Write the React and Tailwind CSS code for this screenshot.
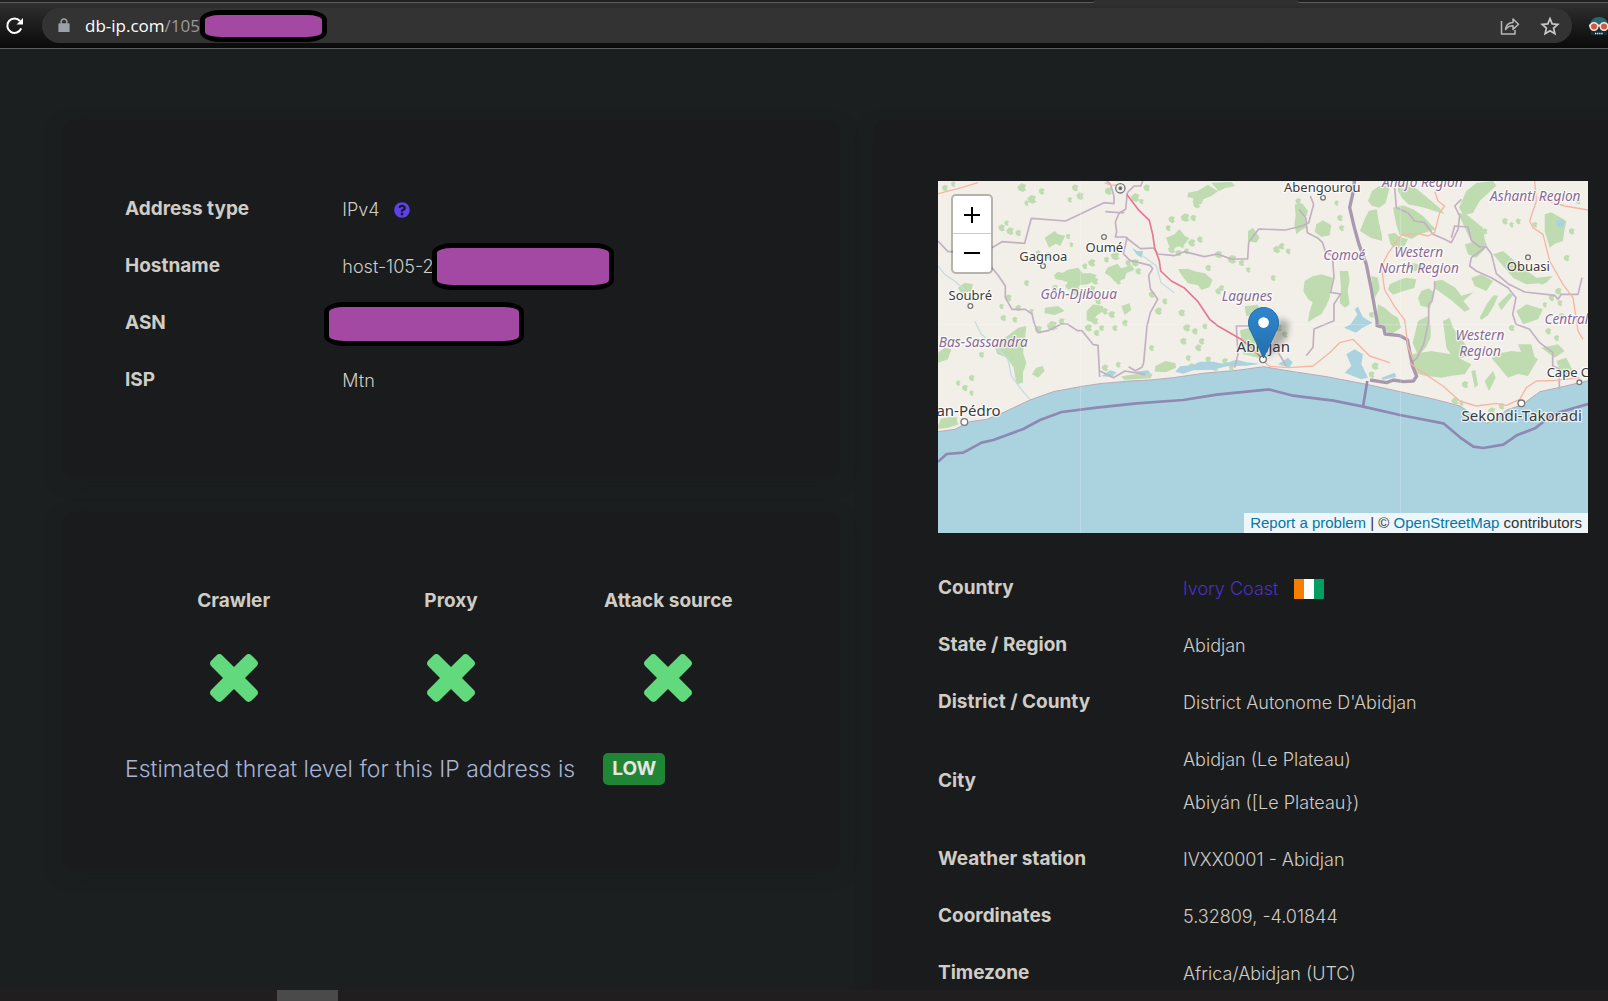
import React from "react";
import { FaQuestionCircle } from "react-icons/fa";

const connection = [
  { label: "Address type", value: "IPv4", help: true },
  { label: "Hostname", value: "host-105-2", mask: "w-[182px] h-[47px] -ml-0.5" },
  { label: "ASN", value: "", mask: "w-[200px] h-[44px] -ml-[18px]" },
  { label: "ISP", value: "Mtn" },
];

const location = [
  { label: "Country", values: ["Ivory Coast"], flag: true },
  { label: "State / Region", values: ["Abidjan"] },
  { label: "District / County", values: ["District Autonome D'Abidjan"] },
  { label: "City", values: ["Abidjan (Le Plateau)", "Abiyán ([Le Plateau})"] },
  { label: "Weather station", values: ["IVXX0001 - Abidjan"] },
  { label: "Coordinates", values: ["5.32809, -4.01844"] },
  { label: "Timezone", values: ["Africa/Abidjan (UTC)"] },
];

const woods = [
  "M1290 60l12-30 20-14 35-4 -8 30 -6 24 -20 14 -22-6z",
  "M1266 150l14-36 12-24 24-6 6 36 10 44 0 16-34-10z",
  "M1380 30l0-30 34 8 30 22 26 22 34 28 16 20-60-20-50-10-20-22z",
  "M1365 80l30-7 30 12 30 20 26 28 14 12-50 15-24 14-36-12-10-30z",
  "M1585 30l30-24 50-6 10 14-24 22-26 24-20 36-28 6-14-22z",
  "M1560 95l25 5 20 16 30 24 5 34 8 24-38 4-20-40z",
  "M1350 160l20-5 14 12 26 8-12 22-18 8-22-14z",
  "M1070 70l24-2 16 22-10 20 5 30-16 8-14 12-6-30 4-26z",
  "M1135 130l20-12 25 15-5 30-25 5-20-15z",
  "M1100 300l24-14 26-6 35 10-6 30-4 30-10 24-15 26-22 12-18 12 4-30 10-30-14-10-14-24z",
  "M1205 270l25 0 5 28-6 32 6 40-14 10-16-14 4-46z",
  "M1320 370l20 10 20 18 20 12 10 30-30 20-45-30z",
  "M1355 310l30-14 20-6 30 5-6 26-34 10-30 10-15-15z",
  "M1300 285l20 5 5 34-14 26-8-30z",
  "M1450 330l22-8 14 10-2 24-8 26-28-8-8-24z",
  "M1440 420l30-15 8 30 0 34-14 30-24 26-16-40z",
  "M1492 300l20-4 40 24 18 24 36-10-30 26 20 24-16 8-40-34-50-36z",
  "M1515 420l20-10 10 30 20 26 24 34 20 25-30 4-30 6-24-34z",
  "M1625 410l22-42 20-26 13 3-12 28-18 30-20 14z",
  "M1680 370l35-35 10 8-35 45z",
  "M1420 520l60-10 60 10 60 30-20 30-40 4-30 6-50-6-30-9z",
  "M1660 530l30-14 30-6 50 5 30 20-16 26-14 24-30-6-30 11z",
  "M1600 570l12-3 8 45-10 8z",
  "M1640 600l25-30 8 20-20 40z",
  "M1735 390l30-20 50 15-15 30-45 15z",
  "M1740 490l40 0 10 40-30 10z",
  "M1820 100l20-6 20 11 25 15-6 30-4 30-24 8-16 12-15-50z",
  "M1665 220l30-10 24 20 36 30 40 30 50-5-20 20-60 5-40-20z",
  "M1580 190l40-10 20 25-25 25-25-10z",
  "M1600 290l30-10 35 20-20 30-35-15z",
  "M1855 540l30-10 20 40-30 20z",
  "M1810 500l50-10 20 20-30 20z",
  "M1390 255l40-8 30 10-30 14z",
  "M750 35l30-6 30-18 30 20-20 14-24 10-6 14-26-4 2-14-18-2z",
  "M820 5l60-2 12 12-30 6-20 10z",
  "M684 170l26-10 14-16 16 20 14 8-14 18-30 10 -8 10-10-18z",
  "M720 265l30-2 20 8 30 6 24 20-10 22-24 8-10-14-30-6-16-20z",
  "M930 150l15-10 20 30-10 15-25-5z",
  "M366 280l24-14 30-6 16 18 20-2 20 6-10 18-16 10-24 2-14 18-20-8-4-18-20-8z",
  "M508 260l30-12 12 14 30-10 10 14-24 10-6 18-30 8-14-16-16-10z",
  "M320 170l30-20 10 10 22 4-15 30-14-6-20 12z",
  "M170 492l45-32 26-20 24-5-4 40-6 40 10 30-10 30 0 30-20 5-8-50-20-30-30-12z",
  "M282 580l12-20 20-5 6 15-20 20z",
  "M60 320l20-15 25 5-5 20-30 10z",
  "M320 380l40-5 20 15-30 12-30-5z",
  "M446 390l20-20 30 6 0 14-20 14-14 20-16-6z",
  "M550 375l25-8 5 20-20 15z",
  "M652 555l30-15 30 6 2 14-30 14-34-2z",
  "M550 586l50-8 44 0-6 14-80 5z",
  "M0 735l8-22 20-4 28 0 4 22-32 10-28 3z",
  "M0 515l20-15 20 5-10 30-30 10z",
  "M906 448l40-10 24 4 20 28 0 40-30 20-44-10z",
  "M920 376l40-5 5 25-40 10z",
];

const specks = [
  [20,20,8],[45,8,6],[250,20,12],[280,55,12],[310,30,8],[265,65,6],[410,20,9],[425,45,10],[395,55,6],[510,30,10],[590,50,12],[625,20,9],[610,60,6],[190,140,9],[215,150,10],[240,155,8],[205,125,6],[390,165,6],[400,190,5],
  [330,225,10],[300,215,6],[460,245,10],[440,255,7],[530,225,12],[570,245,8],[600,270,8],[520,265,7],[540,300,8],[590,245,10],[740,110,12],[775,70,10],[765,110,8],[700,205,10],[760,185,10],[785,175,8],[720,215,8],[840,220,10],[880,235,12],[910,245,8],[930,265,6],[810,260,8],
  [360,285,12],[410,330,12],[440,340,8],[460,325,10],[210,350,9],[240,380,8],[265,305,7],[280,390,6],[195,410,8],[230,415,7],[190,375,6],[300,445,10],[340,435,14],[370,420,8],[450,440,10],[475,455,8],[520,400,9],[530,440,7],[560,425,8],[480,360,8],
  [640,340,8],[660,390,10],[680,360,7],[730,395,9],[745,440,10],[770,450,8],[800,435,7],[735,480,9],[790,480,8],[840,330,8],[850,320,7],[780,500,9],[810,535,8],[750,530,7],[640,500,7],[100,590,8],[80,620,8],[60,605,6],[100,635,6],[130,520,7],[60,480,8],
  [1015,205,10],[1030,195,8],[1050,210,7],[1005,290,7],[985,340,5],[1195,65,6],[1205,110,8],[1210,140,7],[1100,95,8],[1080,60,8],[1230,20,8],[1020,440,10],[1040,460,8],[1250,560,8],[1310,555,10],[1300,580,8],[1580,610,9],[1550,660,10],[1570,665,6],[1660,690,10],[1690,675,8],
  [1840,350,8],[1865,365,7],[1820,370,6],[1870,405,8],[1885,230,8],[1860,330,9],[1830,450,8],[1855,470,7],[1720,440,8],[1690,460,6],[1900,150,8],[1920,60,7],[1700,120,8],[1720,130,6],[1790,130,7],[1560,480,9],[1740,120,7],[1810,300,9],[1640,150,7],
  [700,115,9],[690,140,7],[730,190,8],[745,210,7],[440,285,8],[470,300,9],[350,320,8],[390,315,8],[500,390,8],[470,420,9],[490,440,7],[540,270,8],[505,235,7],[860,540,8],[830,560,9],[760,555,8],[880,560,7],[500,560,9],[540,550,7],[1300,400,7],
];

const ring = ([x, y, r]) =>
  `M${x - r} ${y - 3}l${r} ${-r + 2}l${r + 2} 4l${-4} ${r}l${r / 2} 4l${-r} ${r / 2}l${-r} -5z`;

const borders = [
  "M0 180l30 32 50 0 M162 200l30-18 68 5 20-75 103 8 115-55 30 3 0-22-10-35-20-20",
  "M502 92l42 3 15 0 M544 95l-12 28 4 30-4 15 30 0 M562 168l45 35 40-2 12 18 50 5 30-12 60 15 40-8 40 15 50 0 3-50 30-40 80 3 50-12 20-10 15-55-10-25",
  "M568 35l-5 50-21 12 M568 168l-12 50 20 20 60 15 8 10-12 20 5 40 22 32-22 40-10 40-10 110-5 14-20 10-20-12",
  "M162 260l20 25 20 30 0 35 20 35 40 0 20 14 6 26 12 30 30-6 40-20 18 0 30 20 14 0 34 42 14 2 5 95 M486 570l40 20 35-20 60 10",
  "M568 35l20-20 20 0 10-25",
  "M1083 85l20 25 5 45 30 15 15 14 10 30 20 10 5 65-10 45 30 5-20 30 0 50-60 25-3 55-20 25 M890 560l10-40-5-85 40 0 30 10 50 60 30 50",
  "M1370 20l5 60 35 15 20 25 30 5 25 35 35 15 20 10 20-40 5-40 -15-30 20-20 M1540 170l10-35 40 3 10 40 25 20 20 0 15 20 15 60 35 30 50 25 90 10 10 12 10-15 50 0 12-50",
  "M1640 200l-40 30 -5 25 20 15 45 20 50 30 24 30-10 50 10 30 40 14 30 40 40 30 0 40 20 10 0 60",
  "M1490 300l0 20-8 40-10 10 0 50-15 70-20 40-20 20",
];

const roads = [
  "M0 38l60-15 60-18", "M500 5l20 8 30-2",
  "M1490 30l10 30 20 15-15 20-15 60-20 10-30-8-50 5-40 55-20 40 10 70 30 50 30 40 10 80 16 40",
  "M1415 545l40 30 60 40 50 45 50 15 60-8 30 6 40-18 20-35 30-20 60-2 70-8",
  "M1790 0l5 60-20 60 10 20 30 20 20 80 40 70 30 40 15 100 15 25", "M1800 50l80 25 70 12",
  "M975 540l20 16 60 4 70-5 50-40 30-30 40-10 50 50 60 20",
];

const places = [
  { name: "Gagnoa", x: 316, y: 239 }, { name: "Oumé", x: 499, y: 212 },
  { name: "Soubré", x: 97, y: 357 }, { name: "Abengourou", x: 1153, y: 34 },
  { name: "Obuasi", x: 1771, y: 271 },
];
const towns = [
  { name: "Abidjan", x: 976, y: 512 }, { name: "Sekondi-Takoradi", x: 1751, y: 720 },
];
const regions = [
  { name: "Gôh-Djiboua", x: 422, y: 353 }, { name: "Lagunes", x: 927, y: 360 },
  { name: "Bas-Sassandra", x: 136, y: 498 }, { name: "Ahafo Region", x: 1453, y: 17 },
  { name: "Ashanti Region", x: 1792, y: 59 }, { name: "Comoé", x: 1219, y: 237 },
  { name: "Western", x: 1442, y: 228 }, { name: "North Region", x: 1442, y: 277 },
  { name: "Western", x: 1626, y: 477 }, { name: "Region", x: 1626, y: 526 },
  { name: "Central", x: 1885, y: 428 },
];
const dots = [[315, 255], [498, 168], [97, 375], [1155, 50], [1770, 229], [1924, 604]];

function MapDrawing() {
  return (
    <svg viewBox="0 0 1950 1056" preserveAspectRatio="xMidYMid slice" className="block h-full w-full" aria-label="Map of Abidjan">
      <defs>
        <linearGradient id="pin" x1="0" y1="0" x2="0" y2="1">
          <stop offset="0" stopColor="#2e86cd" />
          <stop offset="1" stopColor="#2370ad" />
        </linearGradient>
        <filter id="soft" x="-50%" y="-50%" width="200%" height="200%"><feGaussianBlur stdDeviation="10" /></filter>
      </defs>
      <rect width="1950" height="1056" fill="#aad3df" />
      <path fill="#f2efe9" stroke="#b9a9b8" strokeWidth="3" d="M-9-9V752H0L51 745 96 722 146 715 191 697 276 657 346 632 426 617 486 608 576 600 636 597 706 590 796 577 906 567 976 557 1066 572 1166 587 1286 610 1386 632 1486 654 1566 675 1606 702 1646 727 1676 712 1706 687 1751 672 1806 632 1866 619 1960 597V-9z" />
      <g fill="#bfdcb1">
        {woods.map((d) => <path key={d} d={d} />)}
        {specks.map((s) => <path key={s.join()} d={ring(s)} />)}
      </g>
      <g fill="#aad3df">
        <path d="M582 200l15 10 18 0 -3 20-15-8z" />
        <path d="M1218 440l20-10 20-30-8-15 10-8 14 30 15 10 15 8-30 15-20 15z" />
        <path d="M1225 520l25-15 25 15-5 30 20 40-20 5-50-20 20-20z" />
        <path d="M712 572l14-16 40-4 20-10 40 0 30 6 40-12 30 8 40 4-40 6-60 2-40 10-60 2-30 10z" />
        <path d="M490 586l26-18 20 6-14 14z M590 572l40-4 8 8-20 10z" />
        <path d="M1020 550l30-20 14 14-10 16z M1330 590l40-15 5 12-40 10z" />
        <circle cx="1867" cy="127" r="12" />
      </g>
      <path fill="none" stroke="#c3dde3" strokeWidth="4" d="M0 255l20 25 30 20 30 26M110 420l20 40 40 35 40 40 10 50 30 40 26 30M615 225l40 30 14 50 40 30" />
      <g fill="none" stroke="#c3b0c3" strokeWidth="5" strokeLinejoin="round">
        {borders.map((d) => <path key={d} d={d} />)}
      </g>
      <path fill="none" stroke="#a999ae" strokeWidth="10" strokeLinejoin="round" d="M1250-5l-5 40-10 45 14 60 14 50 22 60 16 80 16 90 0 14 20 5 4 20 45 5 22 12 8 40 8 40 12 30-10 14-30 2-30-5-20 8-50-8" />
      <path fill="none" stroke="#8f88b2" strokeWidth="8" strokeLinejoin="round" d="M0 842L26 819 76 815 131 785 166 777 256 744 306 717 371 693 476 680 596 667 736 657 836 641 986 626 996 626 1066 644 1186 659 1276 677 1386 702 1516 727 1566 769 1606 797 1636 801 1696 791 1736 763 1791 742 1846 699 1950 669M1288 600l-13 77" />
      <g fill="none" stroke="#f7b6a2" strokeWidth="4" strokeLinejoin="round">
        {roads.map((d) => <path key={d} d={d} />)}
      </g>
      <path fill="none" stroke="#e8768f" strokeWidth="5" strokeLinejoin="round" d="M566 40L600 85 634 118 644 160 650 200 664 240 668 270 700 300 738 320 780 362 815 415 840 435 908 474 940 500 975 535" />
      <path stroke="#fff" strokeOpacity=".22" strokeWidth="3" d="M428 0V1056M1388 0V1056M0 431H1950" />
      <g fill="#fff" stroke="#777" strokeWidth="4">
        {dots.map(([x, y]) => <circle key={x} cx={x} cy={y} r="7" />)}
        <circle cx="79" cy="723" r="10" /><circle cx="1750" cy="667" r="10" /><circle cx="975" cy="535" r="10" />
        <circle cx="547" cy="22" r="14" fill="#f2efe9" /><circle cx="547" cy="22" r="4" fill="#555" />
      </g>
      <g fontFamily='"Noto Sans", sans-serif' textAnchor="middle" paintOrder="stroke" stroke="#ffffff" strokeOpacity=".7" strokeWidth="8" strokeLinejoin="round">
        <g fontSize="39" fill="#3c3c3c">
          {places.map((p) => <text key={p.name} x={p.x} y={p.y}>{p.name}</text>)}
          <text x="1826" y="589" textAnchor="start">Cape Coast</text>
        </g>
        <g fontSize="45" fill="#3c3c3c">
          {towns.map((p) => <text key={p.name} x={p.x} y={p.y}>{p.name}</text>)}
          <text x="188" y="705" textAnchor="end">San-Pédro</text>
        </g>
        <g fontSize="41" fill="#8b6a95" fontStyle="italic">
          {regions.map((p) => <text key={p.x + p.name + p.y} x={p.x} y={p.y}>{p.name}</text>)}
        </g>
      </g>
      <path d="M978 531l24-70 24-50 28 15-8 45-40 45z" fill="#000" opacity=".28" filter="url(#soft)" />
      <g transform="translate(930 378) scale(3.73)">
        <path d="M12.5.4C5.8.4.4 5.8.4 12.6c0 2.9.9 5.4 2.4 8L12.5 41l9.7-20.4c1.5-2.6 2.4-5.1 2.4-8C24.600 5.800 19.200.4 12.500.4z" fill="url(#pin)" stroke="#2a6ba5" strokeWidth=".8" />
        <circle cx="12.500" cy="12.500" r="4.300" fill="#fff" />
      </g>
    </svg>
  );
}

function Mask({ className }) {
  return (
    <span className={"block shrink-0 rounded-[20px/10px] border-5 border-black bg-[#a349a4] " + className} />
  );
}

function Cross() {
  return (
    <svg viewBox="110 366 1188 1188" className="h-12 w-12 fill-[#62d97c]" role="img" aria-label="No">
      <path d="M1298 1322q0 40-28 68l-136 136q-28 28-68 28t-68-28l-294-294-294 294q-28 28-68 28t-68-28l-136-136q-28-28-28-68t28-68l294-294-294-294q-28-28-28-68t28-68l136-136q28-28 68-28t68 28l294 294 294-294q28-28 68-28t68 28l136 136q28 28 28 68t-28 68l-294 294 294 294q28 28 28 68z" />
    </svg>
  );
}

function BrowserBar() {
  return (
    <header className="shrink-0 bg-[#303030]">
      <div className="grid h-[3px] grid-cols-[1095fr_202fr_311fr]">
        <div className="rounded-br-sm border-b border-[#5c5c5c] bg-[#202020]" />
        <div />
        <div className="rounded-bl-sm border-b border-[#5c5c5c] bg-[#202020]" />
      </div>
      <div className="flex h-[46px] items-center border-b border-b-[#5e5e5e] bg-linear-to-b from-[#303030] to-[#0a0a0a] pl-[5px]">
        <button type="button" aria-label="Reload" className="flex w-[37px] shrink-0">
          <svg viewBox="0 0 20 20" className="h-5 w-5" fill="none" stroke="#fff" strokeWidth="2">
            <path d="M16.200 12.300A7.200 7.200 0 1 1 15 5" />
            <path d="M18 2v6.500h-6.500z" fill="#fff" stroke="none" />
          </svg>
        </button>
        <div className="flex h-[35px] min-w-0 flex-1 items-center rounded-full bg-[#333333] pr-3 pl-4">
          <svg viewBox="0 0 12 16" className="mr-[15px] h-[15px] w-[12px] shrink-0" aria-hidden="true">
            <rect x="0" y="5.500" width="12" height="9.500" rx="1" fill="#9aa0a6" />
            <path d="M3 6V4a3 3 0 0 1 6 0v2" fill="none" stroke="#9aa0a6" strokeWidth="1.600" />
          </svg>
          <span className="font-['Open_Sans','Noto_Sans',sans-serif] text-[17px] text-white">db-ip.com<span className="text-[#9a9a9a]">/105</span></span>
          <Mask className="h-8 w-[127px]" />
          <button type="button" aria-label="Share" className="ml-auto">
            <svg viewBox="0 0 20 20" className="h-5 w-5" fill="none" stroke="#b8b8b8" strokeWidth="1.500">
              <path d="M1.500 5v13h13.500v-4M5.500 13.500C6 9 8.500 6.800 13 6.600V3l5.500 5.300L13 13.400V9.800c-3.500 0-5.500 1-7.500 3.700z" strokeLinejoin="round" />
            </svg>
          </button>
          <button type="button" aria-label="Bookmark this page" className="ml-5">
            <svg viewBox="0 0 20 20" className="h-5 w-5" fill="none" stroke="#c9c9c9" strokeWidth="1.700">
              <path d="M10 2.600l2.200 5.300 5.600.5-4.200 3.700 1.300 5.600-4.900-3-4.900 3 1.300-5.600-4.200-3.700 5.600-.5z" />
            </svg>
          </button>
        </div>
        <button type="button" aria-label="Extension" className="ml-[17px] w-[19px] shrink-0 overflow-hidden">
          <svg viewBox="0 0 20 20" className="h-5 w-5">
            <path d="M1 10C1 4 5 1 10 1s9 3 9 9z" fill="#2a6575" />
            <path d="M2 10h16v9H2z" fill="#142f3b" />
            <path d="M0 9.500h20" stroke="#e8dcd0" strokeWidth="2" />
            <circle cx="5" cy="10.500" r="3.800" fill="#d4583f" stroke="#f3e6da" strokeWidth="1.600" />
            <circle cx="15" cy="10.500" r="3.800" fill="#d4583f" stroke="#f3e6da" strokeWidth="1.600" />
            <path d="M6 17.500h8" stroke="#e4edf0" strokeWidth="1.600" strokeDasharray="1.300 .8" />
          </svg>
        </button>
      </div>
    </header>
  );
}

const label = "p-0 text-left text-[19px] font-bold";

export default function App() {
  return (
    <div className="flex h-screen flex-col overflow-hidden bg-[#1b1f20] font-[Inter,sans-serif] text-[18px] text-[#d0ccc6]">
      <BrowserBar />
      <main className="grid min-h-0 flex-1 grid-cols-[778fr_735fr] gap-[33px] overflow-hidden pt-[71px] pl-[62px]">
        <div className="flex flex-col gap-9">
          <section className="h-[356px] rounded-xl bg-[#191b1c] px-[63px] pt-[61px] shadow-[0_6px_16px_rgba(24,27,28,0.5)]">
            <table className="w-full table-fixed">
              <tbody>
                {connection.map((row) => (
                  <tr key={row.label} className="h-[57px]">
                    <th scope="row" className={"w-1/3 " + label}>{row.label}</th>
                    <td className="p-0 font-light">
                      <div className="flex h-[57px] items-center">
                        {row.value}
                        {row.help && <button type="button" aria-label="About IPv4" className="ml-3.5"><FaQuestionCircle className="h-4 w-4 text-[#5f41ea]" /></button>}
                        {row.mask && <Mask className={row.mask} />}
                      </div>
                    </td>
                  </tr>
                ))}
              </tbody>
            </table>
          </section>
          <section className="h-[356px] rounded-xl bg-[#191b1c] px-[63px] pt-[75px] shadow-[0_6px_16px_rgba(24,27,28,0.5)]">
            <ul className="grid grid-cols-3">
              {["Crawler", "Proxy", "Attack source"].map((name) => (
                <li key={name} className="flex flex-col items-center gap-10">
                  <h3 className="text-[19px] leading-[27px] font-bold">{name}</h3>
                  <Cross />
                </li>
              ))}
            </ul>
            <p className="mt-[51px] flex items-center gap-7 text-[23px] leading-8 font-light text-[#a9b3d4]">
              Estimated threat level for this IP address is
              <strong className="rounded-[5px] bg-[#1f8636] px-[9px] text-[19px] leading-8 font-bold text-[#e8e6e3]">LOW</strong>
            </p>
          </section>
        </div>
        <section className="rounded-l-xl bg-[#191b1c] pt-[61px] pr-5 pl-[65px] shadow-[0_6px_16px_rgba(24,27,28,0.5)]">
          <div className="relative h-[352px] overflow-hidden">
            <MapDrawing />
            <div className="absolute top-[13px] left-[13px] flex w-[42px] flex-col rounded-[5px] border-2 border-black/25 bg-white bg-clip-padding text-black">
              <button type="button" aria-label="Zoom in" className="flex h-[38px] items-center justify-center border-b border-[#ccc]">
                <svg viewBox="0 0 16 16" className="h-4 w-4" stroke="#000" strokeWidth="2"><path d="M8 0v16M0 8h16" /></svg>
              </button>
              <button type="button" aria-label="Zoom out" className="flex h-[38px] items-center justify-center">
                <svg viewBox="0 0 16 16" className="h-4 w-4" stroke="#000" strokeWidth="2"><path d="M0 8h16" /></svg>
              </button>
            </div>
            <p className="absolute right-0 bottom-0 bg-white/80 px-[6px] font-['Liberation_Sans',sans-serif] text-[15px] leading-5 text-[#333]">
              <a href="#report" className="text-[#0078a8]">Report a problem</a> | © <a href="#osm" className="text-[#0078a8]">OpenStreetMap</a> contributors
            </p>
          </div>
          <table className="mt-[27px] w-full table-fixed">
            <tbody>
              {location.map((row) => (
                <tr key={row.label}>
                  <th scope="row" className={"w-[245px] " + label}>{row.label}</th>
                  <td className="px-0 py-[7px] font-light">
                    {row.values.map((v) => (
                      <div key={v} className="flex h-[43px] items-center">
                        {row.flag ? <a href="#ivory-coast" className="text-[#4a31c8]">{v}</a> : v}
                        {row.flag && (
                          <svg viewBox="0 0 30 20" className="ml-4 h-5 w-[30px]" role="img" aria-label="Flag of Ivory Coast">
                            <path fill="#f77f00" d="M0 0h10v20H0z" /><path fill="#fff" d="M10 0h10v20H10z" /><path fill="#009e60" d="M20 0h10v20H20z" />
                          </svg>
                        )}
                      </div>
                    ))}
                  </td>
                </tr>
              ))}
            </tbody>
          </table>
        </section>
      </main>
      <footer className="flex h-[11px] shrink-0 bg-[#201e1f] pl-[277px]">
        <div className="w-[61px] bg-[#4a4a4a]" />
      </footer>
    </div>
  );
}
